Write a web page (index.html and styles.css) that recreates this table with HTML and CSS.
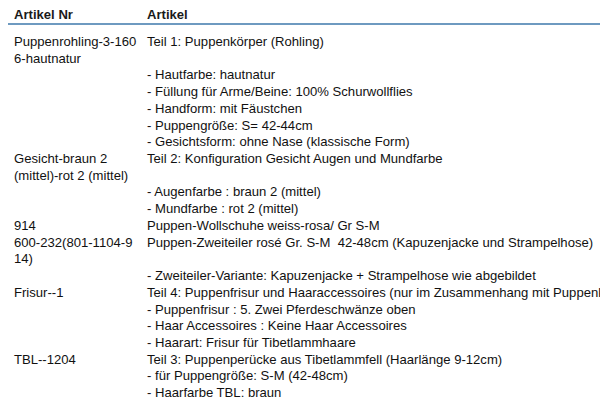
FILE: index.html
```html
<!DOCTYPE html>
<html>
<head>
<meta charset="utf-8">
<link rel="stylesheet" href="styles.css">
</head>
<body>
<div class="table">
  <div class="head">
    <div class="cell">Artikel Nr</div>
    <div class="cell">Artikel</div>
  </div>
  <div class="body">
    <div class="row">
      <div class="cell"><div>Puppenrohling-3-160</div><div>6-hautnatur</div></div>
      <div class="cell">
        <div>Teil 1: Puppenkörper (Rohling)</div>
        <div class="blank"></div>
        <div>- Hautfarbe: hautnatur</div>
        <div>- Füllung für Arme/Beine: 100% Schurwollflies</div>
        <div>- Handform: mit Fäustchen</div>
        <div>- Puppengröße: S= 42-44cm</div>
        <div>- Gesichtsform: ohne Nase (klassische Form)</div>
      </div>
    </div>
    <div class="row">
      <div class="cell"><div>Gesicht-braun 2</div><div>(mittel)-rot 2 (mittel)</div></div>
      <div class="cell">
        <div>Teil 2: Konfiguration Gesicht Augen und Mundfarbe</div>
        <div class="blank"></div>
        <div>- Augenfarbe : braun 2 (mittel)</div>
        <div>- Mundfarbe : rot 2 (mittel)</div>
      </div>
    </div>
    <div class="row">
      <div class="cell"><div>914</div></div>
      <div class="cell"><div>Puppen-Wollschuhe weiss-rosa/ Gr S-M</div></div>
    </div>
    <div class="row">
      <div class="cell"><div>600-232(801-1104-9</div><div>14)</div></div>
      <div class="cell">
        <div>Puppen-Zweiteiler rosé Gr. S-M&nbsp; 42-48cm (Kapuzenjacke und Strampelhose)</div>
        <div class="blank"></div>
        <div>- Zweiteiler-Variante: Kapuzenjacke + Strampelhose wie abgebildet</div>
      </div>
    </div>
    <div class="row">
      <div class="cell"><div>Frisur--1</div></div>
      <div class="cell">
        <div>Teil 4: Puppenfrisur und Haaraccessoires (nur im Zusammenhang mit Puppenkopf)</div>
        <div>- Puppenfrisur : 5. Zwei Pferdeschwänze oben</div>
        <div>- Haar Accessoires : Keine Haar Accessoires</div>
        <div>- Haarart: Frisur für Tibetlammhaare</div>
      </div>
    </div>
    <div class="row">
      <div class="cell"><div>TBL--1204</div></div>
      <div class="cell">
        <div>Teil 3: Puppenperücke aus Tibetlammfell (Haarlänge 9-12cm)</div>
        <div>- für Puppengröße: S-M (42-48cm)</div>
        <div>- Haarfarbe TBL: braun</div>
      </div>
    </div>
  </div>
</div>
</body>
</html>
```
FILE: styles.css
```css
html, body {
  margin: 0;
  padding: 0;
  background: #ffffff;
  overflow: hidden;
}
body {
  width: 600px;
  height: 415px;
  font-family: "Liberation Sans", Arial, sans-serif;
  font-size: 13.1px;
  color: #111111;
}
.table {
  margin-left: 8px;
  width: 700px;
}
.head, .row {
  display: grid;
  grid-template-columns: 133px 1fr;
}
.head {
  font-weight: bold;
  color: #1a1a1a;
  padding-top: 7px;
  height: 16px;
  line-height: 16px;
  border-bottom: 2px solid #6e9ac0;
}
.body {
  padding-top: 9px;
}
.cell {
  padding-left: 6px;
  white-space: nowrap;
  line-height: 16.72px;
}
.blank {
  height: 16.72px;
}
```
